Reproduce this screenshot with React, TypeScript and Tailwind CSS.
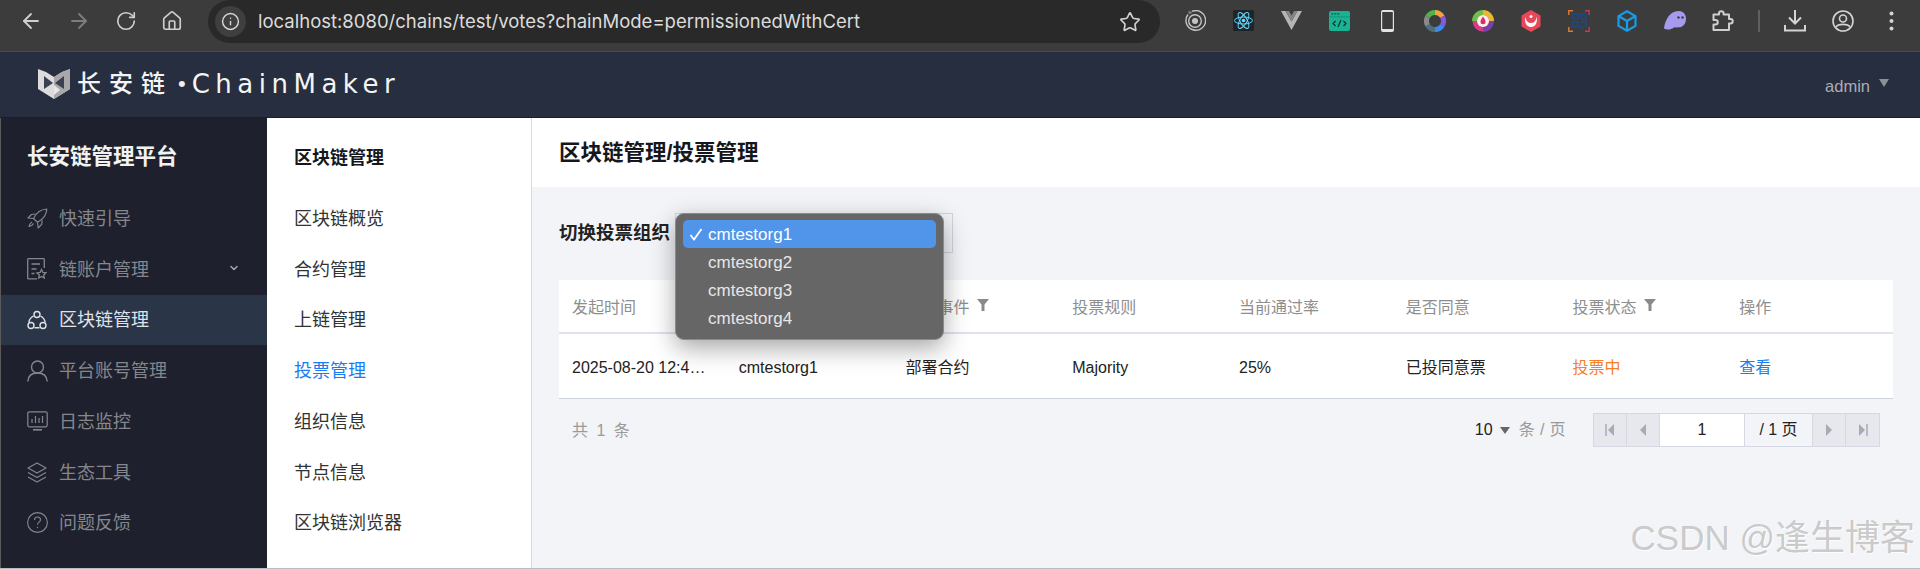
import React from "react";
import { ArrowLeft, ArrowRight, RotateCw, Home, Info, Star, ChevronDown } from "lucide-react";

const CN = "font-['Liberation_Sans','Noto_Sans_CJK_SC',sans-serif]";

const Ext = ({ children }: { children: React.ReactNode }) => (
  <div className="w-[48px] flex items-center justify-center shrink-0">{children}</div>
);

function Toolbar() {
  return (
    <div className="h-[52px] bg-[#3c3c3c] border-b border-[#4a4a4a] flex items-start shrink-0">
      <div className="flex w-[208px] h-[41px] items-center pl-[19px] gap-[24px] shrink-0">
        <ArrowLeft size={24} className="text-[#cfcfcf]" strokeWidth={1.8} />
        <ArrowRight size={24} className="text-[#7d7d7d]" strokeWidth={1.8} />
        <RotateCw size={22} className="text-[#cfcfcf]" strokeWidth={1.8} />
        <Home size={22} className="text-[#cfcfcf]" strokeWidth={1.8} />
      </div>
      <div className="w-[952px] h-[43px] rounded-[22px] bg-[#292929] flex items-center pl-[7px] pr-[19px] shrink-0">
        <div className="w-[31px] h-[31px] rounded-full bg-[#3f3f3f] flex items-center justify-center">
          <Info size={19} className="text-[#d8d8d8]" strokeWidth={1.8} />
        </div>
        <span className="ml-[12px] text-[18.5px] text-[#dcdcdc] font-['Inter',sans-serif]">localhost:8080/chains/test/votes?chainMode=permissionedWithCert</span>
        <Star size={22} className="ml-auto text-[#d0d0d0]" strokeWidth={1.8} />
      </div>
      <div className="flex h-[41px] ml-[11px] items-stretch">
        <Ext>
          <svg width="22" height="22" viewBox="0 0 22 22" fill="none" stroke="#c4c4c4"><path d="M4 4.500A9.800 9.800 0 1 0 8 1.400" strokeWidth="1.400" /><circle cx="11" cy="11" r="6.300" strokeWidth="1.400" /><circle cx="11" cy="11" r="3" fill="#c4c4c4" stroke="none" /><circle cx="6" cy="2.500" r="1.800" fill="#777" stroke="none" /></svg>
        </Ext>
        <Ext>
          <svg width="21" height="21" viewBox="0 0 21 21"><rect width="21" height="21" rx="1.500" fill="#20232a" /><g fill="none" stroke="#61dafb" strokeWidth="1"><ellipse cx="10.500" cy="10.500" rx="9" ry="3.500" /><ellipse cx="10.500" cy="10.500" rx="9" ry="3.500" transform="rotate(60 10.500 10.500)" /><ellipse cx="10.500" cy="10.500" rx="9" ry="3.500" transform="rotate(120 10.500 10.500)" /></g><circle cx="10.500" cy="10.500" r="1.800" fill="#61dafb" /></svg>
        </Ext>
        <Ext>
          <svg width="21" height="19" viewBox="0 0 21 19"><path d="M0 0h4.500l6 10.500L16.500 0H21L10.500 19z" fill="#b5b5b5" /><path d="M4.500 0H8l2.500 4.500L13 0h3.500l-6 10.500z" fill="#858585" /></svg>
        </Ext>
        <Ext>
          <svg width="21" height="20" viewBox="0 0 21 20"><rect width="21" height="20" rx="2" fill="#19b394" /><rect y="5.500" width="21" height="0.800" fill="#0f8c73" /><path d="M2.500 2.800h1.800M5.500 2.800h1.800M8.500 2.800h1.800" stroke="#0e4f42" strokeWidth="1.300" /><path d="M6.500 10l-2.500 2.500 2.500 2.500M14.500 10l2.500 2.500-2.500 2.500M12 9l-3 7" fill="none" stroke="#0d2a2a" strokeWidth="1.100" /></svg>
        </Ext>
        <Ext>
          <svg width="13" height="22" viewBox="0 0 13 22"><rect width="13" height="22" rx="2" fill="#e2e2e2" /><rect x="1.200" y="2" width="10.600" height="17" fill="#3c3c3c" /></svg>
        </Ext>
        <Ext>
          <svg width="22" height="22" viewBox="0 0 22 22" fill="none" strokeWidth="5">
            <path d="M11 2.500A8.500 8.500 0 0 1 18.400 6.800" stroke="#f2a33a" />
            <path d="M18.400 6.800A8.500 8.500 0 0 1 18.400 15.200" stroke="#8a55e0" />
            <path d="M18.400 15.200A8.500 8.500 0 0 1 11 19.500" stroke="#3f8ae8" />
            <path d="M11 19.500A8.500 8.500 0 0 1 3.600 15.200" stroke="#4f6f7f" />
            <path d="M3.600 15.200A8.500 8.500 0 0 1 3.600 6.800" stroke="#8a8a8a" />
            <path d="M3.600 6.800A8.500 8.500 0 0 1 11 2.500" stroke="#55b04a" />
          </svg>
        </Ext>
        <Ext>
          <svg width="22" height="22" viewBox="0 0 22 22" fill="none" strokeWidth="5">
            <circle cx="11" cy="11" r="10.500" fill="#d83a8a" stroke="none" />
            <path d="M11 2.500A8.500 8.500 0 0 1 19.500 11" stroke="#e8b92f" />
            <path d="M2.500 11A8.500 8.500 0 0 1 11 2.500" stroke="#6fbf4a" />
            <path d="M19.500 11A8.500 8.500 0 0 1 11 19.500" stroke="#7a3fa8" />
            <circle cx="11" cy="11" r="6" fill="#fbf1e8" stroke="none" />
            <path d="M11 6.500c1.800 2.500 2.500 4 2.500 5.300a2.500 2.500 0 0 1-5 0c0-1.300.7-2.800 2.500-5.300z" fill="#d92f6d" stroke="none" />
          </svg>
        </Ext>
        <Ext>
          <svg width="20" height="22" viewBox="0 0 20 22"><path d="M10 0l9.500 5.500v11L10 22 .5 16.500v-11z" fill="#ec4758" /><path d="M4.500 7c.5 4 2.500 6 5.500 6s5-2 5.500-6c1.500 5-1 10-5.500 10S3 12 4.500 7z" fill="#fff" /><circle cx="10" cy="6.500" r="1.500" fill="#fff" /></svg>
        </Ext>
        <Ext>
          <svg width="22" height="22" viewBox="0 0 22 22" fill="none"><path d="M5 .8H.8V5M.8 17v4.200H5" stroke="#e07a35" strokeWidth="1.400" /><path d="M17 .8h4.200V5M21.200 17v4.200H17" stroke="#cf3450" strokeWidth="1.400" /><g stroke="#1d4a86" strokeWidth="1.500"><rect x="5" y="4" width="5" height="5" /><rect x="13" y="4" width="5" height="5" /><rect x="5" y="12" width="5" height="5" /><path d="M13 12h5v5M13 15v3h3" /></g></svg>
        </Ext>
        <Ext>
          <svg width="20" height="22" viewBox="0 0 20 22" fill="none" stroke="#1b9be3" strokeWidth="2.200" strokeLinejoin="round"><path d="M10 1.200l8.500 4.900v9.800L10 20.800l-8.500-4.900V6.100z" /><path d="M1.800 6.200L10 11l8.200-4.800M10 11v9.500" /></svg>
        </Ext>
        <Ext>
          <svg width="22" height="19" viewBox="0 0 22 19"><path d="M0 17.500C1 9 6 0 14.500 0 19 0 22 3 22 7.500c0 4-2 7.500-5 8.500-1.500.5-2 0-3 .3-1 .4-2 .4-3-.3-3 2.500-8 3.500-11 1.500z" fill="#a59bee" /><circle cx="14.500" cy="6.500" r="1.200" fill="#3a3a3a" /><circle cx="18.500" cy="6.500" r="1.200" fill="#3a3a3a" /></svg>
        </Ext>
        <Ext>
          <svg width="22" height="22" viewBox="0 0 22 22" fill="none" stroke="#cfcfcf" strokeWidth="2" strokeLinejoin="round"><path d="M1.500 4.500H7V3.500a2.300 2.300 0 0 1 4.600 0V4.500H17V9h1.500a2.200 2.200 0 0 1 0 4.400H17V20H1.500v-5.500H3.500a2 2 0 0 0 0-4.500H1.500z" /></svg>
        </Ext>
        <div className="w-[2px] h-[22px] self-center bg-[#606060] ml-[11px] mr-[12px]" />
        <div className="w-[46px] flex items-center justify-center">
          <svg width="22" height="22" viewBox="0 0 22 22" fill="none" stroke="#d4d4d4" strokeWidth="2"><path d="M11 0v13M5 7.500l6 6 6-6" /><path d="M1 15v5.500h20V15" /></svg>
        </div>
        <div className="w-[50px] flex items-center justify-center">
          <svg width="22" height="22" viewBox="0 0 22 22" fill="none" stroke="#d4d4d4" strokeWidth="1.600"><circle cx="11" cy="11" r="10" /><circle cx="11" cy="8.500" r="3.500" /><path d="M4 17c2-3.500 12-3.500 14 0" /></svg>
        </div>
        <div className="w-[46px] flex items-center justify-center">
          <svg width="5" height="20" viewBox="0 0 5 20" fill="#d4d4d4"><circle cx="2.500" cy="2.500" r="2" /><circle cx="2.500" cy="10" r="2" /><circle cx="2.500" cy="17.500" r="2" /></svg>
        </div>
      </div>
    </div>
  );
}

const menuCls = "h-[50.75px] flex items-center pt-[2px] text-[18px]";

const RocketIcon = () => (
  <svg width="21" height="21" viewBox="0 0 21 21" fill="none" stroke="currentColor" strokeWidth="1.200" strokeLinejoin="round"><path d="M6.500 10.500C9 5 13.500 1.500 19.800 1c-.3 6-3.800 10.500-9.300 13.200z" /><path d="M6.500 10.500L1 10l3.500-3.500 4 -.5M10.500 14.200l.7 5.800 3.600-3.800.3-4" /><path d="M5 14c-1.500.8-2.500 2.300-3 4.500 2.200-.4 3.700-1.400 4.500-3" /></svg>
);
const DocStar = () => (
  <svg width="20" height="22" viewBox="0 0 20 22" fill="none" stroke="currentColor" strokeWidth="1.300"><path d="M10 20.800H1.300a.6.600 0 0 1-.6-.6V1.300a.6.600 0 0 1 .6-.6h15.400a.6.600 0 0 1 .6.600V10" /><path d="M4.500 6h8.500M4.500 11h5M4.500 15.500h3" /><path d="M14.500 11.500l1.400 3 3.100.4-2.300 2.100.6 3.100-2.800-1.600-2.800 1.600.6-3.100-2.300-2.100 3.100-.4z" /></svg>
);
const Rings = () => (
  <svg width="20" height="20" viewBox="0 0 20 20" fill="none" stroke="currentColor" strokeWidth="1.400"><circle cx="10" cy="4.500" r="3" /><circle cx="4" cy="15.500" r="3" /><circle cx="16" cy="15.500" r="3" /><path d="M6.500 6C3.800 7.500 2.200 9.500 1.800 12.500M13.500 6c2.700 1.500 4.300 3.500 4.700 6.500M7.500 17.800h5" /></svg>
);
const Person = () => (
  <svg width="21" height="22" viewBox="0 0 21 22" fill="none" stroke="currentColor" strokeWidth="1.400"><circle cx="10.500" cy="7" r="6" /><path d="M.8 21.500c.3-5.500 4-8.500 9.700-8.500s9.400 3 9.700 8.500" /></svg>
);
const Monitor = () => (
  <svg width="21" height="20" viewBox="0 0 21 20" fill="none" stroke="currentColor" strokeWidth="1.200"><rect x="0.800" y="0.800" width="19.400" height="15" rx="1.500" /><path d="M5 12V8M8.500 12V5M12 12V7M15.500 12V5" /><path d="M6 18.800h9" strokeWidth="1.600" /></svg>
);
const Stack = () => (
  <svg width="20" height="21" viewBox="0 0 20 21" fill="none" stroke="currentColor" strokeWidth="1.200" strokeLinejoin="round"><path d="M10 1l9 5-9 5-9-5z" /><path d="M1 10.500l9 5 9-5M1 15l9 5 9-5" /></svg>
);
const Help = () => (
  <svg width="21" height="21" viewBox="0 0 21 21" fill="none" stroke="currentColor" strokeWidth="1.100"><circle cx="10.500" cy="10.500" r="9.900" /><path d="M7.500 8c0-1.800 1.300-3 3-3s3 1.200 3 2.800c0 2.400-3 2.400-3 5" /><circle cx="10.500" cy="15.500" r=".7" fill="currentColor" stroke="none" /></svg>
);

function Sidebar() {
  const items: { t: string; i: React.ReactNode; active?: boolean; chev?: boolean }[] = [
    { t: "快速引导", i: <RocketIcon /> },
    { t: "链账户管理", i: <DocStar />, chev: true },
    { t: "区块链管理", i: <Rings />, active: true },
    { t: "平台账号管理", i: <Person /> },
    { t: "日志监控", i: <Monitor /> },
    { t: "生态工具", i: <Stack /> },
    { t: "问题反馈", i: <Help /> },
  ];
  return (
    <div className="w-[267px] bg-[#1e212d] border-l border-[#5a5a5a] shrink-0">
      <div className="h-[75px] pl-[26px] pt-[20px] text-[21.5px] leading-[38px] font-bold text-[#f2f2f2]">长安链管理平台</div>
      <div>
        {items.map((m) => (
          <div key={m.t} className={`${menuCls} pl-[26px] ${m.active ? "bg-[#2a3548] text-[#e0e3e8]" : "text-[#85878c]"}`}>
            <span className="w-[32px] flex items-center -mt-[2px]">{m.i}</span>
            <span>{m.t}</span>
            {m.chev && <ChevronDown size={12} strokeWidth={3} className="ml-auto mr-[27px] -mt-[4px] text-[#a6a8ad]" />}
          </div>
        ))}
      </div>
    </div>
  );
}

function SubNav() {
  const items = ["区块链概览", "合约管理", "上链管理", "投票管理", "组织信息", "节点信息", "区块链浏览器"];
  return (
    <div className="w-[265px] bg-white border-r border-[#d8dae0] shrink-0">
      <div className="h-[75px] pl-[27px] pt-[21px] text-[18px] leading-[38px] font-bold text-[#15171c]">区块链管理</div>
      {items.map((t, i) => (
        <div key={t} className={`${menuCls} pl-[27px] ${i === 3 ? "text-[#1a7cf5]" : "text-[#333]"}`}>{t}</div>
      ))}
    </div>
  );
}

const Funnel = ({ cls = "" }: { cls?: string }) => (
  <svg width="12" height="12" viewBox="0 0 12 12" className={cls}><path d="M0 0h12L7.500 5.500V12H4.500V5.500z" fill="#8a8a8a" /></svg>
);

function Table() {
  const cols: { t: string; f?: boolean }[] = [
    { t: "发起时间" },
    { t: "" },
    { t: "投票事件", f: true },
    { t: "投票规则" },
    { t: "当前通过率" },
    { t: "是否同意" },
    { t: "投票状态", f: true },
    { t: "操作" },
  ];
  const cell = "px-[13px] flex items-center min-w-0";
  return (
    <div className="bg-white border-b border-[#cfd5e0] mt-[27px] w-[1334px]">
      <div className="grid grid-cols-8 h-[54px] border-b-2 border-[#dfe3ea] text-[16px] text-[#8e8e8e]">
        {cols.map((c, i) => (
          <div key={i} className={`${cell} pt-[3px] gap-[7px]`}>
            <span>{c.t}</span>
            {c.f && <Funnel cls="-mt-[6px]" />}
          </div>
        ))}
      </div>
      <div className="grid grid-cols-8 h-[64px] pt-[3px] text-[16px] text-[#222]">
        <div className={cell}>2025-08-20 12:4…</div>
        <div className={cell}>cmtestorg1</div>
        <div className={cell}>部署合约</div>
        <div className={cell}>Majority</div>
        <div className={cell}>25%</div>
        <div className={cell}>已投同意票</div>
        <div className={`${cell} text-[#f5802a]`}>投票中</div>
        <div className={`${cell} text-[#1a7cf5]`}>查看</div>
      </div>
    </div>
  );
}

function Pager() {
  const Btn = ({ children }: { children: React.ReactNode }) => (
    <div className="w-[33px] bg-[#e6e8ee] border-r border-[#d3d8e2] last:border-r-0 flex items-center justify-center">{children}</div>
  );
  const c = "#a6abb6";
  return (
    <div className="flex items-center justify-between pl-[13px] pr-[13px] pt-[14px] w-[1334px]">
      <div className="text-[16px] text-[#9a9a9a] tracking-[2px] pt-[2px]">共 1 条</div>
      <div className="flex items-center">
        <span className="text-[16px] text-[#222]">10</span>
        <svg width="10" height="7" viewBox="0 0 10 7" className="ml-[7px]"><path d="M0 0h10L5 7z" fill="#666" /></svg>
        <span className="ml-[9px] text-[16px] text-[#9a9a9a] tracking-[0.4px]">条 / 页</span>
        <div className="ml-[27px] h-[34px] w-[287px] flex border border-[#d3d8e2] bg-[#e6e8ee]">
          <Btn><svg width="10" height="14" viewBox="0 0 10 14"><path d="M1 1v12" stroke={c} strokeWidth="1.500" /><path d="M9 1v12L3 7z" fill={c} /></svg></Btn>
          <Btn><svg width="8" height="14" viewBox="0 0 8 14"><path d="M7 1v12L1 7z" fill={c} /></svg></Btn>
          <div className="w-[85px] bg-white text-[16px] text-[#222] flex items-center justify-center border-r border-[#d3d8e2]">1</div>
          <div className="w-[68px] text-[16px] text-[#222] flex items-center justify-center bg-[#f2f4f8] border-r border-[#d3d8e2]">/ 1 页</div>
          <Btn><svg width="8" height="14" viewBox="0 0 8 14"><path d="M1 1v12l6-6z" fill={c} /></svg></Btn>
          <Btn><svg width="10" height="14" viewBox="0 0 10 14"><path d="M9 1v12" stroke={c} strokeWidth="1.500" /><path d="M1 1v12l6-6z" fill={c} /></svg></Btn>
        </div>
      </div>
    </div>
  );
}

function Dropdown() {
  const opts = ["cmtestorg1", "cmtestorg2", "cmtestorg3", "cmtestorg4"];
  return (
    <div className="absolute left-[-1px] top-[-1px] w-[269px] h-[127px] rounded-[9px] bg-[#666666] border border-[#8b8b8b] shadow-[0_8px_24px_rgba(0,0,0,0.35)] px-[7px] pt-[6px] font-['Liberation_Sans',sans-serif] text-[17px] text-[#e6e6e6]">
      {opts.map((o, i) => (
        <div key={o} className={`h-[28px] flex items-center rounded-[5px] pl-[25px] pt-[1px] relative ${i === 0 ? "bg-[#5195ea] text-white" : ""}`}>
          {i === 0 && (
            <svg width="14" height="13" viewBox="0 0 14 13" className="absolute left-[6px] top-[8px]"><path d="M1.500 7l3.500 4.500L12.500 1" fill="none" stroke="#fff" strokeWidth="1.800" /></svg>
          )}
          {o}
        </div>
      ))}
    </div>
  );
}

function Main() {
  return (
    <div className="flex-1 min-w-0 bg-[#f2f4f8] flex flex-col">
      <div className="h-[69px] bg-white pl-[27px] pt-[1px] flex items-center text-[21.5px] font-bold text-[#15171c] shrink-0">区块链管理/投票管理</div>
      <div className="pl-[27px] pt-[26px] flex-1">
        <div className="flex items-center h-[40px]">
          <span className="text-[18.5px] font-bold text-[#222] w-[116px] shrink-0">切换投票组织</span>
          <div className="relative w-[278px] h-[40px] bg-[#f2f4f8] border border-[#cfd5e0] shrink-0">
            <Dropdown />
          </div>
        </div>
        <Table />
        <Pager />
      </div>
    </div>
  );
}

export default function App() {
  return (
    <div className={`relative h-[569px] w-[1920px] overflow-hidden flex flex-col ${CN}`}>
      <Toolbar />
      <div className="h-[66px] bg-[#272e3f] flex items-center pl-[38px] pr-[31px] shrink-0 border-b border-[#1c1f29]">
        <svg width="32" height="31" viewBox="0 0 32 31" className="-mt-[2px]">
          <path d="M0 1l8 3 8 5 8-5 8-3v20l-16 10L0 21z" fill="#dcdcdc" />
          <path d="M16 9v22l16-10V1l-8 3z" fill="#a8a8a8" />
          <path d="M6 8l9 7-9 6zM26 8l-9 7 9 6z" fill="#3a4152" />
          <path d="M16 17l6 5-6 5z" fill="#e8e8e8" />
        </svg>
        <span className="ml-[7px] text-[24px] leading-none font-medium text-[#f4f4f4] tracking-[8px] -mt-[2px]">长安链</span>
        <span className="ml-[5px] text-[22px] leading-none text-[#f0f0f0] -mt-[2px]">•</span>
        <span className="ml-[6px] text-[26px] leading-none text-[#f4f4f4] font-['DejaVu_Sans',sans-serif] tracking-[5.500px] -mt-[2px]">ChainMaker</span>
        <span className="ml-auto text-[16.5px] pt-[3px] text-[#a9adb6]">admin</span>
        <svg width="10" height="8" viewBox="0 0 10 8" className="ml-[9px] -mt-[4px]"><path d="M0 0h10L5 8z" fill="#8b8f98" /></svg>
      </div>
      <div className="flex flex-1 min-h-0 border-b border-[#bdbdbd]">
        <Sidebar />
        <SubNav />
        <Main />
      </div>
      <div className="absolute right-[5px] bottom-[14px] text-[35px] leading-none text-[#b5b5b5]/70 [text-shadow:1px_1px_0_rgba(255,255,255,0.9)] pointer-events-none">CSDN @逢生博客</div>
    </div>
  );
}
